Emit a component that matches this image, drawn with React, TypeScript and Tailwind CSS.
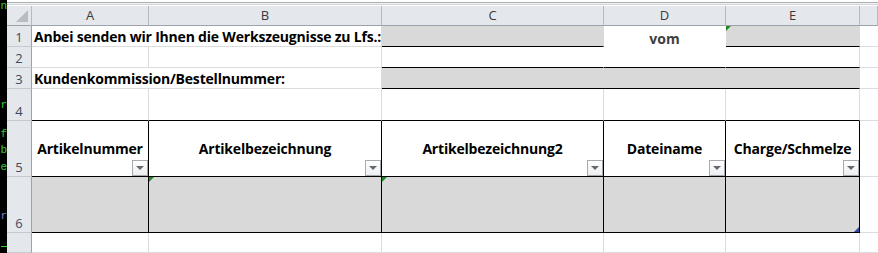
import React from 'react';

const font = { fontFamily: '"Open Sans", "Noto Sans", Arial, sans-serif' };

const GRID = 'border-r border-b border-[#dadcdd]';
const HEAD = 'bg-[#e4e7ec] flex items-center justify-center text-[13px] text-[#3a3a3a] border-r border-b border-r-[#b6bbc1] border-b-[#9da3ab]';
const ROWHEAD = 'bg-[#e4e7ec] flex items-end justify-center pb-[2px] text-[13px] leading-none text-[#3e4a5c] border-r border-b border-r-[#9da3ab] border-b-[#c6cace]';

function Dropdown() {
  return (
    <div className="absolute right-0 bottom-0 w-[16px] h-[16px] border border-[#a7abb0] bg-gradient-to-b from-white to-[#eceef1] flex items-center justify-center">
      <div className="w-0 h-0 border-l-[4px] border-r-[4px] border-t-[4px] border-l-transparent border-r-transparent border-t-[#666a70]" />
    </div>
  );
}

function GreenMark() {
  return <div className="absolute top-0 left-0 w-0 h-0 border-t-[5px] border-r-[5px] border-t-[#1f8a1f] border-r-transparent" />;
}

function HeaderCell({ label }: { label: string }) {
  return (
    <div className="relative border-r border-b border-black flex items-center justify-center font-bold text-[14px] text-black tracking-[-0.2px]">
      {label}
      <Dropdown />
    </div>
  );
}

export default function App() {
  const headers = ['Artikelnummer', 'Artikelbezeichnung', 'Artikelbezeichnung2', 'Dateiname', 'Charge/Schmelze'];

  return (
    <div className="flex w-[878px] h-[253px] overflow-hidden bg-white" style={font}>
      {/* terminal strip on the left */}
      <div className="w-[7px] h-full bg-black flex flex-col items-end text-[11px] leading-none font-mono text-[#33cc33]">
        <span className="mt-[1px]">n</span>
        <span className="mt-[88px]">r</span>
        <span className="mt-[18px]">f</span>
        <span className="mt-[5px]">b</span>
        <span className="mt-[6px]">e</span>
        <span className="mt-[38px] text-[#6f7fe0]">r</span>
        <div className="mt-[24px] w-[6px] h-[1px] bg-[#33cc33]" />
      </div>

      <div className="flex-1 flex flex-col">
        {/* top edge */}
        <div className="h-[6px] flex flex-col">
          <div className="h-[2px] bg-white" />
          <div className="h-[1px] bg-[#a9adb2]" />
          <div className="h-[1px] bg-[#f4f5f7]" />
          <div className="h-[1px] bg-[#cfd2d6]" />
          <div className="h-[1px] bg-white" />
        </div>

        <div className="flex-1 grid grid-cols-[25px_117px_233px_222px_122px_134px_1fr] grid-rows-[20px_21px_21px_21px_32px_56px_56px_1fr]">
          {/* column headers */}
          <div className={`${HEAD} relative`}>
            <div className="absolute right-[3px] bottom-[3px] w-0 h-0 border-b-[12px] border-l-[12px] border-b-[#b9bdc3] border-l-transparent" />
          </div>
          <div className={HEAD}>A</div>
          <div className={HEAD}>B</div>
          <div className={HEAD}>C</div>
          <div className={HEAD}>D</div>
          <div className={HEAD}>E</div>
          <div className={HEAD}></div>

          {/* row 1 */}
          <div className={ROWHEAD}>1</div>
          <div className={`col-span-2 ${GRID} flex items-center pl-[2px] font-bold text-[14px] text-black tracking-[-0.2px] whitespace-nowrap`}>
            Anbei senden wir Ihnen die Werkszeugnisse zu Lfs.:
          </div>
          <div className="bg-[#d9d9d9] border-b border-r border-b-black border-r-[#d9d9d9]" />
          <div className="row-span-2 bg-white border-b border-r border-b-black border-r-white flex justify-center pt-[2px] font-bold text-[14px] text-[#3f3f3f]">
            vom
          </div>
          <div className="relative bg-[#d9d9d9] border-b border-r border-b-black border-r-[#d9d9d9]">
            <GreenMark />
          </div>
          <div className="border-b border-[#dadcdd]" />

          {/* row 2 */}
          <div className={ROWHEAD}>2</div>
          <div className={GRID} />
          <div className={GRID} />
          <div className="border-b border-r border-b-black border-r-white" />
          <div className="border-b border-r border-b-black border-r-[#dadcdd]" />
          <div className="border-b border-[#dadcdd]" />

          {/* row 3 */}
          <div className={ROWHEAD}>3</div>
          <div className={`col-span-2 ${GRID} flex items-center pl-[2px] font-bold text-[14px] text-black tracking-[-0.2px] whitespace-nowrap`}>
            Kundenkommission/Bestellnummer:
          </div>
          <div className="col-span-3 bg-[#d9d9d9] border-b border-r border-b-black border-r-[#d9d9d9]" />
          <div className="border-b border-[#dadcdd]" />

          {/* row 4 */}
          <div className={ROWHEAD}>4</div>
          <div className="border-r border-b border-r-[#dadcdd] border-b-black" />
          <div className="border-r border-b border-r-[#dadcdd] border-b-black" />
          <div className="border-r border-b border-r-[#dadcdd] border-b-black" />
          <div className="border-r border-b border-r-[#dadcdd] border-b-black" />
          <div className="border-r border-b border-r-[#dadcdd] border-b-black" />
          <div className="border-b border-[#dadcdd]" />

          {/* row 5: table headers */}
          <div className={ROWHEAD}>5</div>
          {headers.map((h) => (
            <HeaderCell key={h} label={h} />
          ))}
          <div className="border-b border-[#dadcdd]" />

          {/* row 6: empty data row */}
          <div className={ROWHEAD}>6</div>
          <div className="bg-[#d9d9d9] border-r border-b border-black" />
          <div className="relative bg-[#d9d9d9] border-r border-b border-black">
            <GreenMark />
          </div>
          <div className="relative bg-[#d9d9d9] border-r border-b border-black">
            <GreenMark />
          </div>
          <div className="bg-[#d9d9d9] border-r border-b border-black" />
          <div className="relative bg-[#d9d9d9] border-r border-b border-black">
            <div className="absolute right-0 bottom-0 w-0 h-0 border-b-[5px] border-l-[5px] border-b-[#3346a8] border-l-transparent" />
          </div>
          <div className="border-b border-[#dadcdd]" />

          {/* row 7 */}
          <div className={ROWHEAD}></div>
          <div className={GRID} />
          <div className={GRID} />
          <div className={GRID} />
          <div className={GRID} />
          <div className={GRID} />
          <div className="border-b border-[#dadcdd]" />
        </div>
      </div>
    </div>
  );
}
